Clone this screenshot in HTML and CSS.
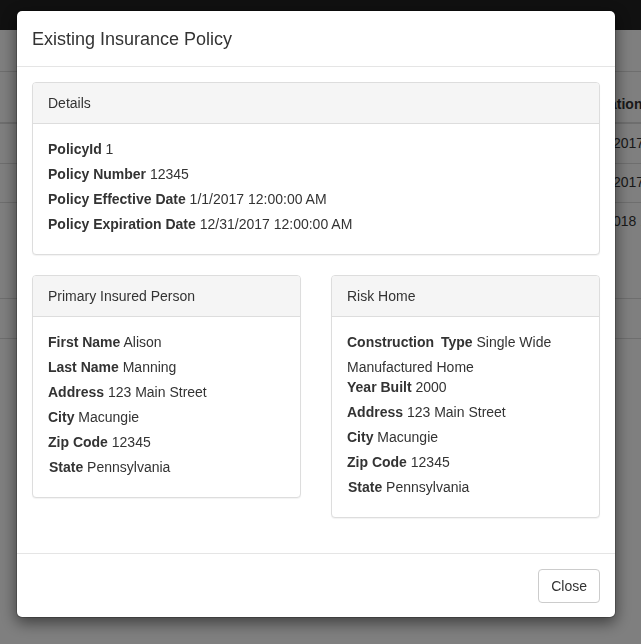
FILE: index.html
```html
<!DOCTYPE html>
<html>
<head>
<meta charset="utf-8">
<title>Existing Insurance Policy</title>
<link rel="stylesheet" href="styles.css">
</head>
<body>
<div class="page">
  <div class="navbar"></div>
  <div class="bg-table">
    <div class="bg-row bg-head"><span class="bg-cell">Expiration</span></div>
    <div class="bg-row bg-r1"><span class="bg-cell">12/31/2017 12:00:00 AM</span></div>
    <div class="bg-row bg-r2"><span class="bg-cell">12/31/2017 12:00:00 AM</span></div>
    <div class="bg-row bg-r3"><span class="bg-cell">1/31/2018 12:00:00 AM</span></div>
    <div class="bg-row bg-r4"><span class="bg-cell"></span></div>
  </div>
</div>
<div class="backdrop"></div>
<div class="modal">
  <div class="modal-dialog">
    <div class="modal-content">
      <div class="modal-header">
        <h4 class="modal-title">Existing Insurance Policy</h4>
      </div>
      <div class="modal-body">
        <div class="panel">
          <div class="panel-heading">Details</div>
          <div class="panel-body">
            <div><label>PolicyId</label> 1</div>
            <div><label>Policy Number</label> 12345</div>
            <div><label>Policy Effective Date</label> 1/1/2017 12:00:00 AM</div>
            <div><label>Policy Expiration Date</label> 12/31/2017 12:00:00 AM</div>
          </div>
        </div>
        <div class="row">
          <div class="col">
            <div class="panel">
              <div class="panel-heading">Primary Insured Person</div>
              <div class="panel-body">
                <div><label>First Name</label> Alison</div>
                <div><label>Last Name</label> Manning</div>
                <div><label>Address</label> 123 Main Street</div>
                <div><label>City</label> Macungie</div>
                <div><label>Zip Code</label> 12345</div>
                <div class="state"><label>State</label> Pennsylvania</div>
              </div>
            </div>
          </div>
          <div class="col">
            <div class="panel">
              <div class="panel-heading">Risk Home</div>
              <div class="panel-body">
                <div><label class="wide">Construction Type</label> Single Wide Manufactured Home</div>
                <div><label>Year Built</label> 2000</div>
                <div><label>Address</label> 123 Main Street</div>
                <div><label>City</label> Macungie</div>
                <div><label>Zip Code</label> 12345</div>
                <div class="state"><label>State</label> Pennsylvania</div>
              </div>
            </div>
          </div>
        </div>
      </div>
      <div class="modal-footer">
        <button type="button" class="btn">Close</button>
      </div>
    </div>
  </div>
</div>
</body>
</html>
```

FILE: styles.css
```css
* { box-sizing: border-box; }
html, body {
  margin: 0;
  padding: 0;
  overflow: hidden;
}
body {
  font-family: "Liberation Sans", Arial, sans-serif;
  font-size: 14px;
  line-height: 20px;
  color: #333;
  background: #fff;
  width: 641px;
  height: 644px;
}
.page {
  width: 641px;
  overflow: hidden;
  white-space: nowrap;
}
.navbar {
  height: 30px;
  background: #222;
}
.bg-table {
  margin-top: 41px;
  border-top: 1px solid #ddd;
}
.bg-row {
  display: flex;
  border-bottom: 1px solid #ddd;
  padding-left: 574px;
}
.bg-head {
  height: 52px;
  align-items: flex-end;
  padding-bottom: 8px;
  border-bottom-width: 2px;
  font-weight: bold;
}
.bg-r1 { height: 40px; padding-top: 9px; }
.bg-r2 { height: 39px; padding-top: 8px; }
.bg-r3 { height: 96px; padding-top: 8px; }
.bg-r4 { height: 40px; }
.backdrop {
  position: fixed;
  inset: 0;
  background: rgba(0, 0, 0, 0.5);
}
.modal {
  position: fixed;
  inset: 0;
  overflow: hidden;
}
.modal-dialog {
  width: 600px;
  margin: 10px 0 0 16px;
}
.modal-content {
  background: #fff;
  border: 1px solid rgba(0, 0, 0, 0.2);
  border-radius: 6px;
  box-shadow: 0 5px 15px rgba(0, 0, 0, 0.5);
  background-clip: padding-box;
}
.modal-header {
  padding: 15px 15px 14px;
  border-bottom: 1px solid #e5e5e5;
}
.modal-title {
  margin: 0;
  font-size: 18px;
  font-weight: 500;
  line-height: 26px;
}
.modal-body {
  padding: 15px;
}
.panel {
  background: #fff;
  border: 1px solid #ddd;
  border-radius: 4px;
  box-shadow: 0 1px 1px rgba(0, 0, 0, 0.05);
  margin-bottom: 20px;
}
.panel-heading {
  padding: 10px 15px;
  background: #f5f5f5;
  border-bottom: 1px solid #ddd;
  border-radius: 3px 3px 0 0;
  color: #333;
}
.panel-body {
  padding: 15px;
}
label {
  display: inline-block;
  max-width: 100%;
  margin-bottom: 5px;
  font-weight: bold;
}
label.wide {
  word-spacing: 3px;
}
.state label {
  margin-left: 1px;
}
.row {
  display: flex;
  margin: 0 -15px;
}
.col {
  width: 50%;
  padding: 0 15px;
}
.modal-footer {
  padding: 15px 15px 14px;
  text-align: right;
  border-top: 1px solid #e5e5e5;
}
.btn {
  display: inline-block;
  padding: 6px 12px;
  font-family: inherit;
  font-size: 14px;
  line-height: 20px;
  color: #333;
  background: #fff;
  border: 1px solid #ccc;
  border-radius: 4px;
  cursor: pointer;
}
```
